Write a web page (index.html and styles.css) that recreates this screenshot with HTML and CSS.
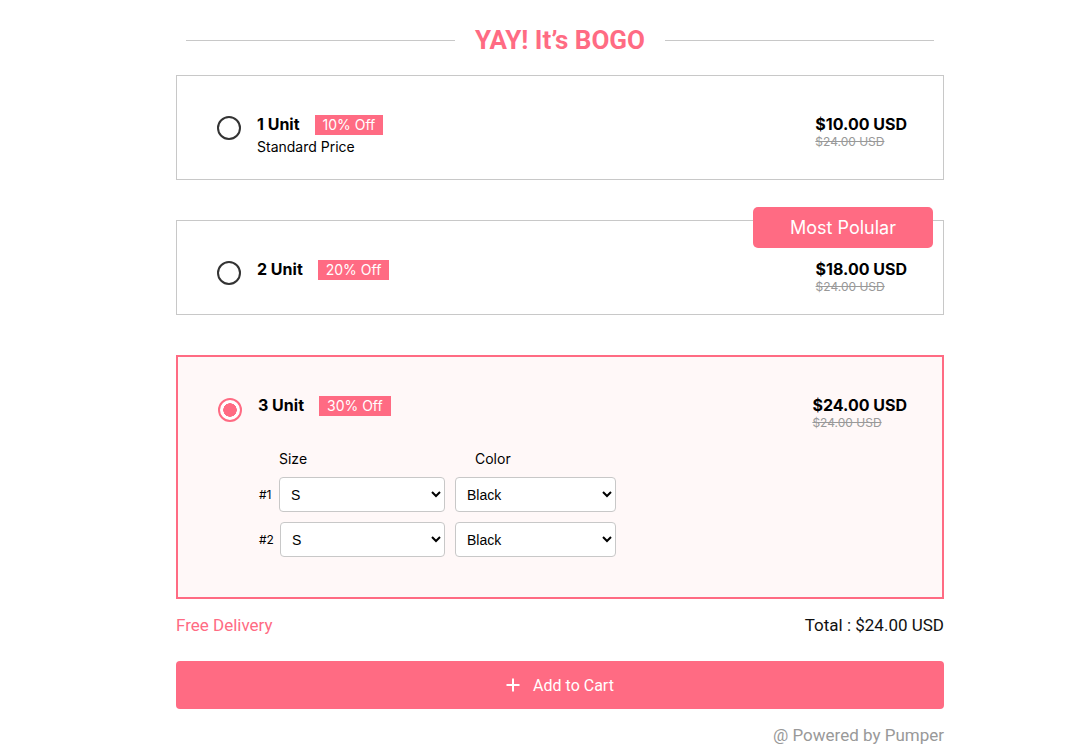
FILE: index.html
```html
<!DOCTYPE html>
<html lang="en">
<head>
<meta charset="utf-8">
<title>BOGO</title>
<link rel="stylesheet" href="styles.css">
</head>
<body>
<div class="page">
  <div class="bundle">
    <div class="title-row">
      <span class="title-line"></span>
      <h2 class="title">YAY! It’s BOGO</h2>
      <span class="title-line"></span>
    </div>

    <div class="card card-one">
      <div class="card-head">
        <span class="radio"></span>
        <div class="info">
          <div class="name-row"><span class="name">1 Unit</span><span class="off">10% Off</span></div>
          <div class="sub">Standard Price</div>
        </div>
        <div class="price">
          <div class="now">$10.00 USD</div>
          <div class="was">$24.00 USD</div>
        </div>
      </div>
    </div>

    <div class="card card-two">
      <span class="popular">Most Polular</span>
      <div class="card-head">
        <span class="radio"></span>
        <div class="info">
          <div class="name-row"><span class="name">2 Unit</span><span class="off">20% Off</span></div>
        </div>
        <div class="price">
          <div class="now">$18.00 USD</div>
          <div class="was">$24.00 USD</div>
        </div>
      </div>
    </div>

    <div class="card card-three selected">
      <div class="card-head">
        <span class="radio checked"></span>
        <div class="info">
          <div class="name-row"><span class="name">3 Unit</span><span class="off">30% Off</span></div>
        </div>
        <div class="price">
          <div class="now">$24.00 USD</div>
          <div class="was">$24.00 USD</div>
        </div>
      </div>
      <div class="options">
        <div class="opt-labels"><span class="lbl-size">Size</span><span class="lbl-color">Color</span></div>
        <div class="opt-row">
          <span class="num">#1</span>
          <select class="sel sel-size"><option>S</option><option>M</option><option>L</option></select>
          <select class="sel sel-color"><option>Black</option><option>White</option></select>
        </div>
        <div class="opt-row">
          <span class="num">#2</span>
          <select class="sel sel-size"><option>S</option><option>M</option><option>L</option></select>
          <select class="sel sel-color"><option>Black</option><option>White</option></select>
        </div>
      </div>
    </div>

    <div class="summary">
      <span class="delivery">Free Delivery</span>
      <span class="total">Total : $24.00 USD</span>
    </div>

    <button class="cart-btn" type="button">
      <svg width="14" height="14" viewBox="0 0 14 14" aria-hidden="true"><path d="M7 0.5V13.5M0.5 7H13.5" stroke="#fff" stroke-width="2" fill="none"/></svg>
      <span>Add to Cart</span>
    </button>

    <div class="powered">@ Powered by Pumper</div>
  </div>
</div>
</body>
</html>
```

FILE: styles.css
```css
* { box-sizing: border-box; }
html, body { margin: 0; padding: 0; background: #fff; }
body { font-family: Inter, "Liberation Sans", Arial, sans-serif; color: #000; }

.page { padding: 20px 0 0 176px; }
.bundle { width: 768px; }

.title-row {
  display: flex;
  align-items: center;
  height: 40px;
  padding: 0 10px;
  margin-bottom: 15px;
}
.title-line { flex: 1; height: 1px; background: #c8c8c8; }
.title {
  margin: 0;
  padding: 0 20px;
  font-family: Roboto, "Liberation Sans", sans-serif;
  font-weight: 700;
  font-size: 26px;
  line-height: 40px;
  color: #ff6b83;
}

.card {
  position: relative;
  border: 1px solid #c8c8c8;
  background: #fff;
  padding: 37px 36px 20px 40px;
  margin-bottom: 40px;
}
.card.selected {
  border: 2px solid #ff6b83;
  background: #fff8f8;
  padding: 37px 35px 40px 40px;
  margin-bottom: 16px;
}

.card-head { display: flex; align-items: flex-start; }
.radio {
  flex: none;
  width: 24px;
  height: 24px;
  margin-top: 3px;
  margin-right: 16px;
  border: 2px solid #333;
  border-radius: 50%;
  background: #fff;
}
.card.selected .radio { margin-top: 4px; }
.radio.checked {
  border-color: #ff6b83;
  background: radial-gradient(circle, #ff6b83 0 6.5px, #fff 7px);
}

.info { flex: 1; }
.card-one .info { padding-bottom: 3px; }
.name-row { display: flex; align-items: center; height: 22px; }
.name { font-size: 16px; font-weight: 700; line-height: 22px; }
.off {
  margin-left: 15px;
  height: 20px;
  margin-top: 2px;
  padding: 0 8px;
  background: #ff6b83;
  color: #fff;
  font-size: 14px;
  line-height: 20px;
}
.sub { margin-top: 3px; font-size: 14px; line-height: 18px; }

.price { flex: none; padding-top: 2px; }
.now { font-size: 16px; font-weight: 700; line-height: 18px; }
.was { font-size: 12px; line-height: 16px; padding-top: 1px; height: 16px; color: #999; text-decoration: line-through; }

.popular {
  position: absolute;
  top: -14px;
  right: 10px;
  width: 180px;
  height: 41px;
  border-radius: 5px;
  background: #ff6b83;
  color: #fff;
  font-size: 18px;
  line-height: 41px;
  text-align: center;
}

.options { margin: 20px 0 0 40px; width: 358px; }
.opt-labels { display: flex; font-size: 14px; line-height: 18px; margin-bottom: 9px; padding-left: 21px; }
.lbl-size { width: 196px; }
.opt-row { display: flex; align-items: center; gap: 6px; margin-bottom: 10px; }
.opt-row:last-child { margin-bottom: 0; }
.num { font-size: 12px; line-height: 16px; width: 15px; padding-left: 1px; }
.opt-row:last-child .num { width: 16px; }
.sel {
  height: 35px;
  border: 1px solid #c8c8c8;
  border-radius: 4px;
  background-color: #fff;
  padding: 0 6px 0 7px;
  font-family: "Liberation Sans", Arial, sans-serif;
  font-size: 14px;
  color: #000;
}
.sel-size { flex: 1; min-width: 0; margin-right: 4px; }
.sel-color { width: 161px; flex: none; }

.summary {
  display: flex;
  justify-content: space-between;
  font-family: Roboto, "Liberation Sans", sans-serif;
  font-size: 17px;
  line-height: 20px;
  margin-bottom: 26px;
}
.delivery { color: #ff6b83; }
.total { color: #111; }

.cart-btn {
  display: flex;
  align-items: center;
  justify-content: center;
  gap: 13px;
  width: 100%;
  height: 48px;
  border: 0;
  border-radius: 4px;
  background: #ff6b83;
  color: #fff;
  font-family: Roboto, "Liberation Sans", sans-serif;
  font-size: 16px;
  padding: 0;
  margin-bottom: 16px;
}

.powered {
  text-align: right;
  font-family: Roboto, "Liberation Sans", sans-serif;
  font-size: 17px;
  line-height: 20px;
  color: #999;
}
```
